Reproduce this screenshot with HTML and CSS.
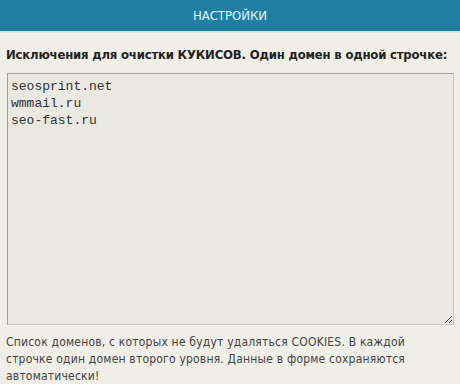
FILE: index.html
```html
<!DOCTYPE html>
<html lang="ru">
<head>
  <meta charset="UTF-8" />
  <title>Настройки</title>
  <link rel="stylesheet" href="styles.css">
</head>
<body>
  <div class="header">НАСТРОЙКИ</div>
  <div class="content">
    <h2>Исключения для очистки КУКИСОВ. Один домен в одной строчке:</h2>
    <textarea class="domains">seosprint.net
wmmail.ru
seo-fast.ru</textarea>
    <p class="hint">Список доменов, с которых не будут удаляться COOKIES. В каждой строчке один домен второго уровня. Данные в форме сохраняются автоматически!</p>
  </div>
</body>
</html>
```

FILE: styles.css
```css
body {
  margin: 0;
  background: #efeee7;
  font-family: "DejaVu Sans Condensed", "DejaVu Sans", Tahoma, sans-serif;
  font-stretch: condensed;
  color: #222;
}
.header {
  height: 31px;
  line-height: 31px;
  background: #1f7fa2;
  border-bottom: 2px solid #d9e4e2;
  color: #e6f4f8;
  text-align: center;
  font-size: 13px;
}
.content {
  padding: 0 7px 0 6px;
}
h2 {
  margin: 14px 0 10px;
  font-size: 13px;
  font-weight: bold;
  line-height: 16px;
  letter-spacing: -0.2px;
  color: #222;
  white-space: nowrap;
}
.domains {
  display: block;
  width: 100%;
  height: 252px;
  box-sizing: border-box;
  margin: 0 0 0 1px;
  padding: 4px 3px;
  border: 1px solid #a3a39c;
  border-right-color: #c9c8c1;
  border-bottom-color: #c9c8c1;
  background: #e9e8e1;
  font-family: "Liberation Mono", "Courier New", monospace;
  font-stretch: normal;
  font-size: 13px;
  line-height: 17px;
  color: #333;
  resize: both;
}
.hint {
  max-width: 425px;
  margin: 9px 0 0;
  font-size: 12px;
  line-height: 17px;
  letter-spacing: 0.2px;
  color: #444;
}
```
